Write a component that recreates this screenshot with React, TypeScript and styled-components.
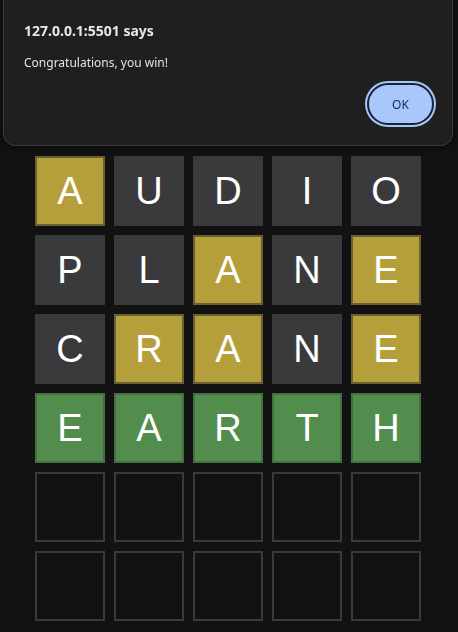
import React from 'react';
import styled, { createGlobalStyle } from 'styled-components';

const GlobalStyle = createGlobalStyle`
  html, body {
    margin: 0;
    padding: 0;
    background: #121213;
  }
`;

type TileState = 'correct' | 'present' | 'absent' | 'empty';

const tileColors: Record<TileState, { bg: string; border: string }> = {
  correct: { bg: '#538d4e', border: '#456f41' },
  present: { bg: '#b59f3b', border: '#6a5f32' },
  absent: { bg: '#3a3a3c', border: '#3a3a3c' },
  empty: { bg: '#121213', border: '#3a3a3c' },
};

const Page = styled.div`
  min-height: 632px;
  background: #121213;
  padding: 156px 0 0 35px;
  box-sizing: border-box;
`;

const Board = styled.div`
  display: grid;
  grid-template-columns: repeat(5, 70px);
  grid-auto-rows: 70px;
  gap: 9px;
`;

const Tile = styled.div<{ $state: TileState }>`
  box-sizing: border-box;
  display: flex;
  align-items: center;
  justify-content: center;
  background: ${(p) => tileColors[p.$state].bg};
  border: 2px solid ${(p) => tileColors[p.$state].border};
  color: #ffffff;
  font-family: 'Liberation Sans', Arial, sans-serif;
  font-size: 38px;
  line-height: 1;
`;

const Dialog = styled.div`
  position: fixed;
  top: -20px;
  left: 3px;
  width: 450px;
  height: 166px;
  box-sizing: border-box;
  background: #1f1f1f;
  border: 1px solid #3b3b3b;
  border-radius: 12px;
  padding: 40px 18px 0 20px;
  display: flex;
  flex-direction: column;
  font-family: 'Noto Sans', 'Open Sans', sans-serif;
  color: #e3e3e3;
  box-shadow: 0 2px 8px rgba(0, 0, 0, 0.5);
`;

const Title = styled.div`
  font-size: 14px;
  font-weight: 700;
  line-height: 20px;
  color: #e8e8e8;
`;

const Message = styled.div`
  margin-top: 13px;
  font-size: 12px;
  line-height: 17px;
  color: #e3e3e3;
`;

const Actions = styled.div`
  display: flex;
  justify-content: flex-end;
  margin-top: 12px;
`;

const OkButton = styled.button`
  width: 67px;
  height: 42px;
  box-sizing: border-box;
  border: 2px solid #16233a;
  border-radius: 21px;
  background: #a8c7fa;
  box-shadow: 0 0 0 2px #a8c7fa;
  color: #0b2a5e;
  font-family: 'Noto Sans', 'Open Sans', sans-serif;
  font-size: 12px;
  cursor: pointer;
`;

const rows: [string, TileState[]][] = [
  ['AUDIO', ['present', 'absent', 'absent', 'absent', 'absent']],
  ['PLANE', ['absent', 'absent', 'present', 'absent', 'present']],
  ['CRANE', ['absent', 'present', 'present', 'absent', 'present']],
  ['EARTH', ['correct', 'correct', 'correct', 'correct', 'correct']],
  ['     ', ['empty', 'empty', 'empty', 'empty', 'empty']],
  ['     ', ['empty', 'empty', 'empty', 'empty', 'empty']],
];

const App: React.FC = () => {
  return (
    <>
      <GlobalStyle />
      <Page>
        <Board>
          {rows.map(([word, states], r) =>
            states.map((state, c) => (
              <Tile key={`${r}-${c}`} $state={state}>
                {word[c].trim()}
              </Tile>
            ))
          )}
        </Board>
      </Page>
      <Dialog>
        <Title>127.0.0.1:5501 says</Title>
        <Message>Congratulations, you win!</Message>
        <Actions>
          <OkButton>OK</OkButton>
        </Actions>
      </Dialog>
    </>
  );
};

export default App;
